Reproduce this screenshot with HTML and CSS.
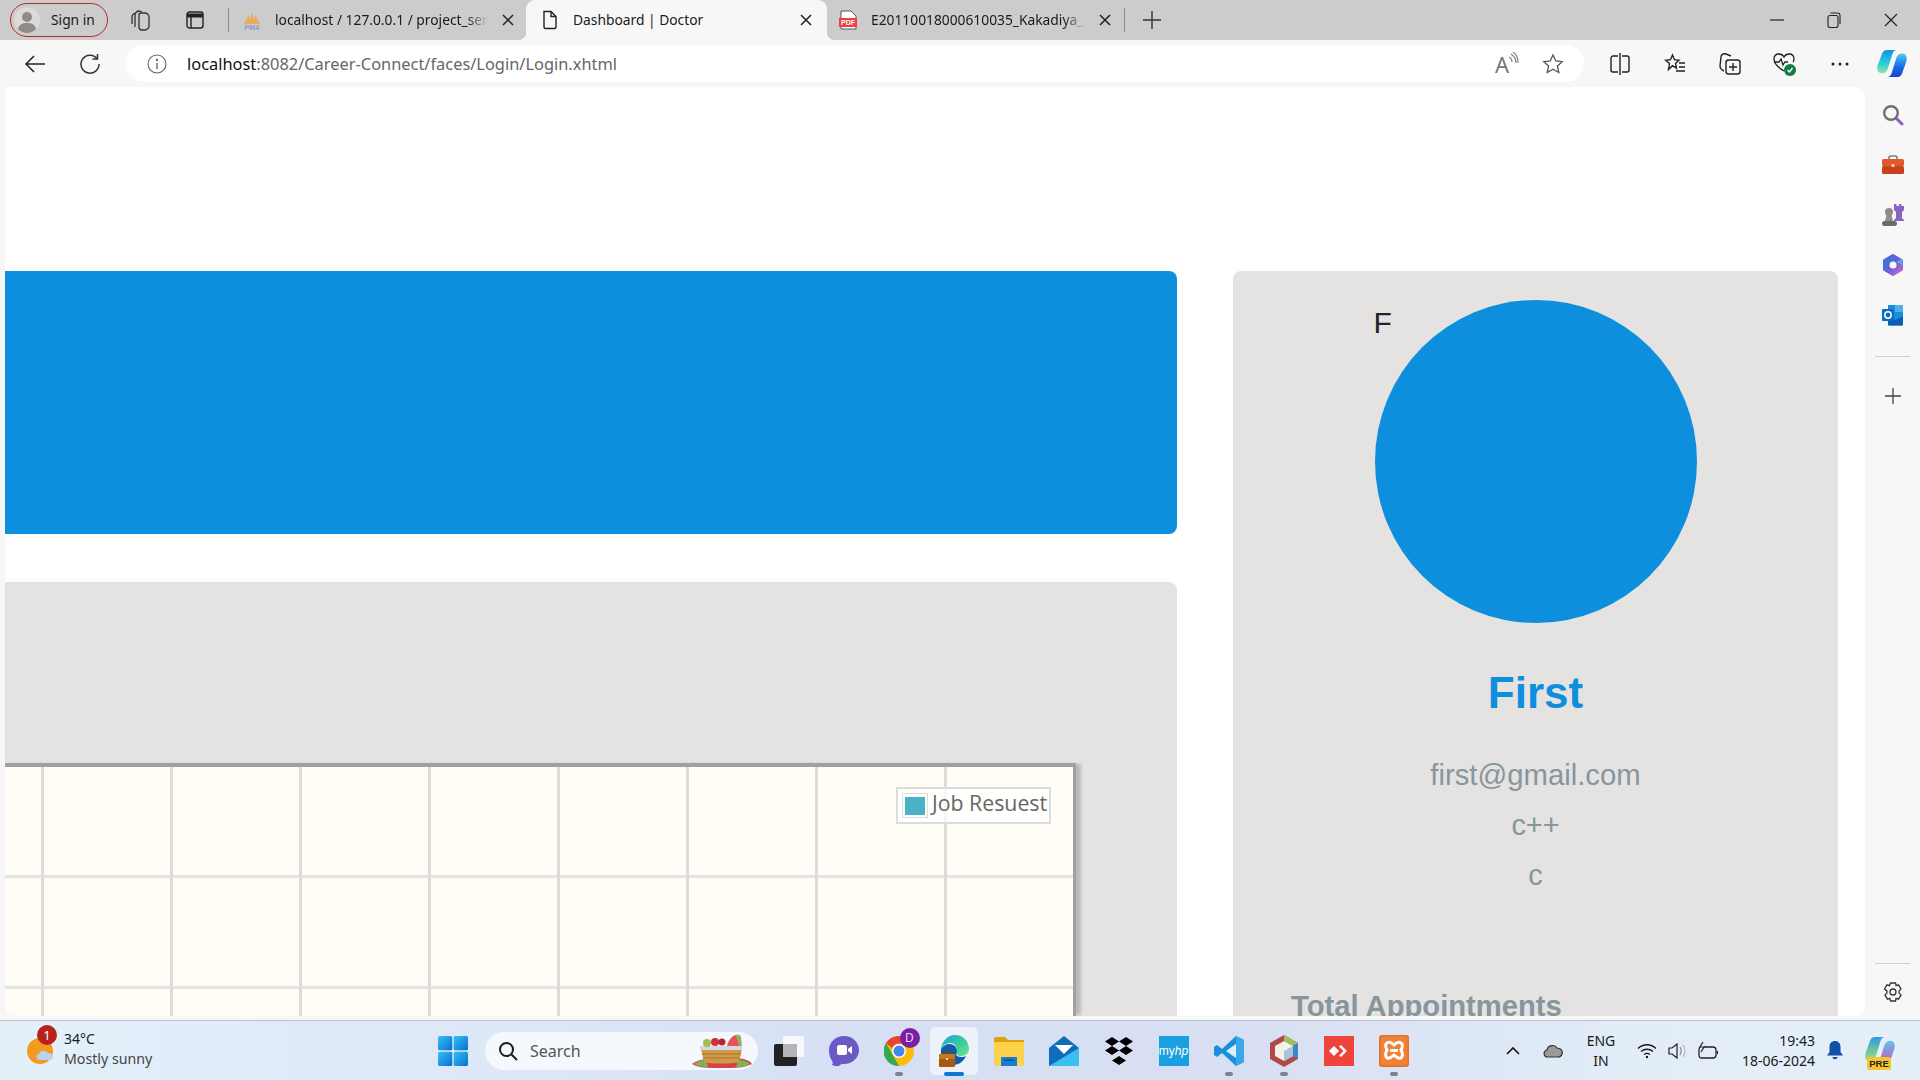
FILE: index.html
```html
<!DOCTYPE html>
<html lang="en">
<head>
    <meta charset="UTF-8">
    <title>Dashboard | Doctor</title>
    <link rel="stylesheet" href="styles.css">
</head>
<body>
    <!-- Tab strip -->
    <div class="tabstrip">
        <div class="profile">
            <svg class="avatar-ico" viewBox="0 0 26 26"><circle cx="13" cy="13" r="13" fill="#dcdad6"/><circle cx="13" cy="10" r="5" fill="#8f8b86"/><path d="M4 22c1-5 5-6 9-6s8 1 9 6c-2 2-5 4-9 4s-7-2-9-4z" fill="#8f8b86"/></svg>
            <span>Sign in</span>
        </div>
        <div class="strip-btn first-btn">
            <svg width="22" height="22" viewBox="0 0 22 22" fill="none" stroke="#333" stroke-width="1.3"><path d="M2 15V8c0-2 1-3 3-4"/><path d="M5 18V6c0-2 2-4 4-4l3 1"/><path d="M9 6c0-1 1-2 2-2h4c2 0 4 2 4 4v9c0 2-2 4-4 4h-3c-2 0-3-1-3-3z"/></svg>
        </div>
        <div class="strip-btn">
            <svg width="18" height="18" viewBox="0 0 18 18" fill="none" stroke="#222" stroke-width="1.4"><rect x="1" y="1" width="16" height="16" rx="2.5"/><path d="M1 4.5h16" stroke-width="4"/><path d="M5 5v12"/></svg>
        </div>
        <div class="strip-sep"></div>
        <div class="tab tab-one">
            <svg class="tab-icon" viewBox="0 0 20 20"><path d="M2 14 7 5l2 9zM7 14l3-12 3 12zM11 14l2-9 5 9z" fill="#eda95c"/><text x="10" y="19.5" text-anchor="middle" class="pma-text">PMA</text></svg>
            <span class="tab-title fade">localhost / 127.0.0.1 / project_ser</span>
            <svg class="tab-close" viewBox="0 0 14 14"><path d="M2 2l10 10M12 2 2 12" stroke="#222" stroke-width="1.5"/></svg>
        </div>
        <div class="tab tab-active">
            <svg class="tab-icon" viewBox="0 0 20 20" fill="none" stroke="#222" stroke-width="1.4"><path d="M4 1.5h7l5 5V17c0 1-.7 1.5-1.5 1.5h-9C4.700 18.5 4 18 4 17z"/><path d="M11 1.5V6.5h5"/></svg>
            <span class="tab-title">Dashboard | Doctor</span>
            <svg class="tab-close" viewBox="0 0 14 14"><path d="M2 2l10 10M12 2 2 12" stroke="#222" stroke-width="1.5"/></svg>
        </div>
        <div class="tab tab-three">
            <svg class="tab-icon" viewBox="0 0 20 20"><path d="M3 1h10l5 5v13H3z" fill="#fff" stroke="#555"/><rect x="1" y="8" width="18" height="9" fill="#ee3f3f"/><text x="10" y="15" text-anchor="middle" class="pdf-text">PDF</text></svg>
            <span class="tab-title fade">E20110018000610035_Kakadiya_</span>
            <svg class="tab-close" viewBox="0 0 14 14"><path d="M2 2l10 10M12 2 2 12" stroke="#222" stroke-width="1.5"/></svg>
        </div>
        <div class="strip-sep no-gap"></div>
        <div class="new-tab">
            <svg width="18" height="18" viewBox="0 0 18 18"><path d="M9 0v18M0 9h18" stroke="#333" stroke-width="1.4"/></svg>
        </div>
        <div class="win-controls">
            <svg width="14" height="14" viewBox="0 0 14 14"><path d="M0 7h14" stroke="#222" stroke-width="1.2"/></svg>
            <svg width="14" height="16" viewBox="0 0 14 16" fill="none" stroke="#222" stroke-width="1.1"><rect x="1" y="3.5" width="10" height="12" rx="2"/><path d="M3.5 1h7c1.5 0 2.5 1 2.5 2.5V12"/></svg>
            <svg width="14" height="14" viewBox="0 0 14 14"><path d="M1 1l12 12M13 1 1 13" stroke="#222" stroke-width="1.2"/></svg>
        </div>
    </div>

    <!-- Address bar row -->
    <div class="toolbar">
        <div class="nav-btn">
            <svg width="22" height="20" viewBox="0 0 22 20" fill="none" stroke="#222" stroke-width="1.5"><path d="M21 10H2M10 2l-8 8 8 8"/></svg>
        </div>
        <div class="nav-btn">
            <svg width="22" height="22" viewBox="0 0 22 22" fill="none" stroke="#333" stroke-width="1.5"><path d="M18 5.5A9 9 0 1 0 20 11"/><path d="M18.5 1v5h-5"/></svg>
        </div>
        <div class="address">
            <svg class="info-ico" width="20" height="20" viewBox="0 0 20 20" fill="none" stroke="#666" stroke-width="1.1"><circle cx="10" cy="10" r="9"/><path d="M10 9v6" stroke-width="1.4"/><circle cx="10" cy="6" r=".6" fill="#666"/></svg>
            <div class="url"><span class="host">localhost</span>:8082/Career-Connect/faces/Login/Login.xhtml</div>
            <div class="read-aloud">
                <span class="read-a">A</span>
                <svg width="10" height="15" viewBox="0 0 10 15" fill="none" stroke="#777" stroke-width="1.1"><path d="M0 5c2 1 3 3 3 5M2 2c3 2 5 5 5 9M4 0c3 2 5 6 5 11"/></svg>
            </div>
            <svg class="star-ico" width="22" height="22" viewBox="0 0 22 22" fill="none" stroke="#555" stroke-width="1.3"><path d="M11 2l2.800 6 6.400.7-4.800 4.300 1.400 6.500L11 16.200 5.200 19.500 6.600 13 1.800 8.700 8.200 8z"/></svg>
        </div>
        <div class="tools">
            <div class="tool"><svg width="20" height="24" viewBox="0 0 20 24" fill="none" stroke="#222" stroke-width="1.4"><path d="M8 4H3C2 4 1 5 1 6v12c0 1 1 2 2 2h5M12 4h5c1 0 2 1 2 2v12c0 1-1 2-2 2h-5M10 1v22"/></svg></div>
            <div class="tool"><svg width="22" height="22" viewBox="0 0 22 22" fill="none" stroke="#222" stroke-width="1.4"><path d="M8.500 2l2 4.700 4.500.5-3.500 3.200 1 4.800-4-2.500-4 3.800 1-6L1.500 7.200 6.500 6.700z"/><path d="M15 10h6M15 14h6M12 18h9"/></svg></div>
            <div class="tool"><svg width="22" height="24" viewBox="0 0 22 24" fill="none" stroke="#222" stroke-width="1.4"><path d="M5 19C3 18 1 16 1 14l1-9c0-2 2-4 5-3l5 2"/><rect x="7" y="8" width="14" height="14" rx="2.5"/><path d="M14 11v8M10 15h8"/></svg></div>
            <div class="tool">
                <svg width="26" height="26" viewBox="0 0 26 26" fill="none" stroke="#222" stroke-width="1.3"><path d="M12 20C7 17 2 13 2 8c0-3 2-5 5-5 2 0 4 1 5 3 1-2 3-3 5-3 3 0 5 2 5 5 0 1 0 2-1 3"/><path d="M3 11h4l2-3 2 6 2-3h3"/><circle cx="18" cy="19" r="6" fill="#107c41" stroke="none"/><path d="M15.500 19l2 2 3-4" stroke="#fff" stroke-width="1.4"/></svg>
            </div>
            <div class="tool"><svg width="18" height="4" viewBox="0 0 18 4" fill="#222"><circle cx="2" cy="2" r="1.5"/><circle cx="9" cy="2" r="1.5"/><circle cx="16" cy="2" r="1.5"/></svg></div>
            <div class="tool tool-copilot">
                <svg width="30" height="29" viewBox="0 0 30 32" preserveAspectRatio="none">
                    <defs>
                        <linearGradient id="cpA" x1="0" y1="0" x2="0" y2="1"><stop offset="0" stop-color="#1090e8"/><stop offset=".6" stop-color="#2fd0d8"/><stop offset="1" stop-color="#8fe8a8"/></linearGradient>
                        <linearGradient id="cpB" x1="0" y1="0" x2="0" y2="1"><stop offset="0" stop-color="#4fc8f4"/><stop offset=".55" stop-color="#1a6fe8"/><stop offset="1" stop-color="#1b3fc8"/></linearGradient>
                    </defs>
                    <path d="M10 1h10c-3 0-4 2-5 6l-4 14c-1 4-3 6-6 6C1 27-1 23 1 17L5 5c1-3 3-4 5-4z" fill="url(#cpA)"/>
                    <path d="M20 31H10c3 0 4-2 5-6l4-14c1-4 3-6 6-6 4 0 6 4 4 10l-4 12c-1 3-3 4-5 4z" fill="url(#cpB)"/>
                </svg>
            </div>
        </div>
    </div>

    <div class="stage">
        <div class="page">
            <div class="left-col">
                <div class="banner"></div>
                <div class="chart-card">
                    <div class="chart">
                        <div class="legend">
                            <div class="swatch"><div class="swatch-fill"></div></div>
                            <span class="legend-label">Job Resuest</span>
                        </div>
                    </div>
                </div>
            </div>
            <div class="profile-card">
                <div class="avatar">
                    <span class="avatar-alt">F</span>
                    <div class="avatar-circle"></div>
                </div>
                <h2 class="doc-name">First</h2>
                <div class="doc-email">first@gmail.com</div>
                <div class="doc-line">c++</div>
                <div class="doc-line">c</div>
                <h3 class="doc-total">Total Appointments</h3>
            </div>
        </div>

        <!-- Edge sidebar -->
        <div class="sidebar">
            <div class="side-item">
                <svg width="22" height="22" viewBox="0 0 22 22" fill="none"><circle cx="9" cy="9" r="6.800" stroke="#6f6f6f" stroke-width="2.4"/><path d="M14 14l6 6" stroke="#8a5cc0" stroke-width="3" stroke-linecap="round"/></svg>
            </div>
            <div class="side-item">
                <svg width="24" height="20" viewBox="0 0 24 20"><path d="M8 5V2.500C8 1.500 9 1 10 1h4c1 0 2 .5 2 1.500V5" fill="none" stroke="#7d7d7d" stroke-width="1.6"/><rect x="1" y="4" width="22" height="7" rx="1.5" fill="#e0592a"/><rect x="1" y="11" width="22" height="8" rx="1.5" fill="#c9401c"/><rect x="10.500" y="9" width="3" height="3" rx=".5" fill="#f4c9b5"/></svg>
            </div>
            <div class="side-item">
                <svg width="24" height="24" viewBox="0 0 24 24"><circle cx="8" cy="9" r="4" fill="#8d8d8d"/><path d="M5.500 12h5l1.500 6H4z" fill="#8d8d8d"/><rect x="1" y="18" width="15" height="5" rx="2.5" fill="#6a6a6a"/><path d="M13 1h2.500v2H18V1h2.500v2H23V1v6l-2 2v6l2 2v1H13v-1l2-2V9l-2-2z" fill="#8a62bf"/></svg>
            </div>
            <div class="side-item">
                <svg width="22" height="24" viewBox="0 0 22 24">
                    <defs><linearGradient id="m3" x1="0" y1="0" x2="1" y2="1"><stop offset="0" stop-color="#2f78e0"/><stop offset=".5" stop-color="#6a5fd8"/><stop offset="1" stop-color="#c76ad0"/></linearGradient></defs>
                    <path d="M11 2.500l8.500 5v9l-8.500 5-8.500-5v-9z" fill="url(#m3)" stroke="url(#m3)" stroke-width="3" stroke-linejoin="round"/><circle cx="11" cy="12" r="3.500" fill="#f7f7f7"/><path d="M14 9l6-3v6z" fill="#4fb0e8"/>
                </svg>
            </div>
            <div class="side-item">
                <svg width="22" height="22" viewBox="0 0 22 22"><path d="M6 1h15v19c0 1-.5 1.500-1.500 1.500H7.500C6.500 21.500 6 21 6 20z" fill="#1490df"/><path d="M6 12l7.500 4L21 12v8c0 1-.5 1.500-1.500 1.500h-12C6.500 21.500 6 21 6 20z" fill="#0a5fb0"/><rect x="13" y="1" width="8" height="7" fill="#50b0ea"/><rect x="0" y="5" width="12" height="12" rx="1" fill="#0f6cbd"/><circle cx="6" cy="11" r="3.200" fill="none" stroke="#fff" stroke-width="1.5"/></svg>
            </div>
            <div class="side-rule"></div>
            <div class="side-plus">
                <svg width="16" height="16" viewBox="0 0 16 16"><path d="M8 0v16M0 8h16" stroke="#444" stroke-width="1.3"/></svg>
            </div>
            <div class="side-bottom">
                <div class="side-rule"></div>
                <svg class="gear" width="20" height="20" viewBox="0 0 20 20" fill="none" stroke="#333" stroke-width="1.3"><path d="M7.500 1h5l.6 2.600 2.400-.8 2.500 4.200-1.900 1.900 0 2.200 1.900 1.900-2.500 4.200-2.400-.8-.6 2.600h-5l-.6-2.600-2.400.8-2.500-4.200 1.900-1.900 0-2.200L1.500 7l2.500-4.200 2.400.8z"/><circle cx="10" cy="10" r="3"/></svg>
            </div>
        </div>
    </div>

    <!-- Windows taskbar -->
    <div class="taskbar">
        <div class="weather">
            <div class="weather-ico">
                <svg width="30" height="34" viewBox="0 0 30 34"><circle cx="14" cy="17" r="13" fill="#f39a1f"/><path d="M14 26c-4 0-5-5-1-6 1-4 7-4 9-1 5-1 7 6 2 7z" fill="#b9d2f2"/></svg>
                <span class="badge">1</span>
            </div>
            <div class="weather-text">
                <div class="temp">34°C</div>
                <div class="sky">Mostly sunny</div>
            </div>
        </div>
        <div class="app">
            <svg width="30" height="30" viewBox="0 0 30 30">
                <defs><linearGradient id="win" x1="0" y1="0" x2="1" y2="1"><stop offset="0" stop-color="#35c1f5"/><stop offset="1" stop-color="#0a6fd0"/></linearGradient></defs>
                <rect x="0" y="0" width="14.300" height="14.300" rx="1.5" fill="url(#win)"/><rect x="15.700" y="0" width="14.300" height="14.300" rx="1.5" fill="url(#win)"/><rect x="0" y="15.700" width="14.300" height="14.300" rx="1.5" fill="url(#win)"/><rect x="15.700" y="15.700" width="14.300" height="14.300" rx="1.5" fill="url(#win)"/>
            </svg>
        </div>
        <div class="search">
            <svg width="20" height="20" viewBox="0 0 20 20" fill="none" stroke="#1a1a1a" stroke-width="2"><circle cx="8.500" cy="8.500" r="6.500"/><path d="M13.500 13.500 19 19"/></svg>
            <span>Search</span>
            <svg class="basket" width="60" height="34" viewBox="0 0 60 34">
                <path d="M0 30c6-5 16-6 24-5h14c8-1 18-1 22 5-8 4-16 4-30 4S6 34 0 30z" fill="#d9414a"/>
                <path d="M2 30c4-3 8-4 12-4l2 7C10 33 5 32 2 30zM46 26c5 0 9 1 12 4-3 2-7 3-14 3z" fill="#7eb356"/>
                <path d="M9 15h41l-3 13c-5 2-30 2-35 0z" fill="#cf9a48"/>
                <path d="M10 20h39M11 24h37" stroke="#a87530" stroke-width="1"/>
                <rect x="8" y="12" width="42" height="4" rx="1" fill="#d8d8e4"/>
                <circle cx="15" cy="9" r="4" fill="#9fc04e"/><circle cx="23" cy="8" r="4" fill="#d4303c"/><circle cx="30" cy="8" r="3.500" fill="#b62833"/>
                <path d="M35 12c1-6 5-10 9-11l4 11z" fill="#e7525a"/><path d="M44 1c2-1 4 0 5 2l1 9h-2z" fill="#86b852"/>
            </svg>
        </div>
        <div class="app">
            <svg width="30" height="30" viewBox="0 0 30 30"><rect x="0" y="8" width="23" height="22" rx="2" fill="#222"/><rect x="9" y="0" width="21" height="21" rx="2" fill="#fff" fill-opacity=".75"/><rect x="9" y="8" width="14" height="13" fill="#b5b5b5"/></svg>
        </div>
        <div class="app">
            <svg width="30" height="30" viewBox="0 0 30 30"><path d="M15 0c8 0 15 6 15 14s-7 14-15 14c-2 0-3 0-5 2-2 0-5 0-7-1 1-1 1-3 0-4-2-3-3-7-3-11C0 6 7 0 15 0z" fill="#6a5bc4"/><rect x="8" y="9" width="10" height="10" rx="2" fill="#fff"/><path d="M19 13l4-3v8l-4-3z" fill="#fff"/></svg>
        </div>
        <div class="app app-run">
            <div class="chrome">
                <svg width="30" height="30" viewBox="0 0 30 30"><circle cx="15" cy="15" r="15" fill="#fbbc05"/><path d="M15 0a15 15 0 0 1 13 7.500H15a7.500 7.500 0 0 0-7 4.500L2 7C5 2.500 10 0 15 0z" fill="#ea4335"/><path d="M2 7l6.500 11.500L15 30A15 15 0 0 1 2 7z" fill="#34a853"/><circle cx="15" cy="15" r="7" fill="#fff"/><circle cx="15" cy="15" r="5.500" fill="#4285f4"/></svg>
                <span class="chrome-badge">D</span>
            </div>
        </div>
        <div class="app app-current">
            <svg width="30" height="32" viewBox="0 0 30 32">
                <defs><linearGradient id="edg" x1="0" y1="0" x2="1" y2="1"><stop offset="0" stop-color="#1fa2d8"/><stop offset=".6" stop-color="#3ecf9a"/><stop offset="1" stop-color="#7be38a"/></linearGradient></defs>
                <path d="M2 14C3 6 9 0 16 0c8 0 14 6 14 14 0 4-3 7-8 7-3 0-5-1-5-3 0-1 1-1 1-3 0-4-3-7-7-7-4 0-7 2-9 6z" fill="url(#edg)"/>
                <path d="M2 14c2-3 5-5 8-5 5 0 8 3 8 7 0 2-1 2-1 3 0 2 2 3 5 3 2 0 3 0 5-1-2 5-7 9-13 9-2 0-4 0-6-1-3-2-5-5-6-9z" fill="#0c5fa8"/>
                <rect x="0" y="19" width="16" height="13" rx="1" fill="#a85a12"/><rect x="0" y="19" width="16" height="5" fill="#c8761f"/><path d="M5 19v-2h6v2" fill="none" stroke="#7a4210" stroke-width="1.4"/><rect x="7" y="23" width="2" height="2" fill="#f6d9a8"/>
            </svg>
        </div>
        <div class="app">
            <svg width="30" height="30" viewBox="0 0 30 30"><path d="M0 3c0-1 1-2 2-2h9l3 3h16v4H0z" fill="#e0a110"/><path d="M0 6h30v22c0 1-1 2-2 2H2c-1 0-2-1-2-2z" fill="#fcd24a"/><rect x="7" y="21" width="16" height="9" fill="#1580cf"/><rect x="10" y="23.500" width="10" height="1.5" fill="#0b4f86"/></svg>
        </div>
        <div class="app">
            <svg width="30" height="30" viewBox="0 0 30 30"><path d="M0 12 15 0l15 12v18H0z" fill="#0f6cbd"/><path d="M30 12v18H0z" fill="#39c0ee"/><path d="M6 9h18l-9 9z" fill="#fff"/></svg>
        </div>
        <div class="app">
            <svg width="30" height="28" viewBox="0 0 30 28" fill="#000"><path d="M8 0l7 4.500L8 9 1 4.500zM22 0l7 4.500L22 9l-7-4.500zM8 9l7 4.500L8 18l-7-4.500zM22 9l7 4.500L22 18l-7-4.500zM15 19l7 4.500L15 28l-7-4.500z"/></svg>
        </div>
        <div class="app">
            <div class="myhp">my<i>hp</i></div>
        </div>
        <div class="app app-run">
            <svg width="30" height="30" viewBox="0 0 30 30"><path d="M22 0l8 4v22l-8 4L8 17l-5 4-3-2v-8l3-2 5 4z" fill="#1a8fdc"/><path d="M22 0v30l8-4V4z" fill="#3ba7e8"/><path d="M22 8 12 15l10 7z" fill="#f4f8fc" fill-opacity=".9"/></svg>
        </div>
        <div class="app app-run">
            <svg width="30" height="32" viewBox="0 0 30 32"><path d="M15 0l14 8v16l-14 8L1 24V8z" fill="#b04a4a"/><path d="M15 0l14 8-5 3-9-5z" fill="#9ec05a"/><path d="M29 8v16l-5-3V11z" fill="#3f86c8"/><path d="M15 6l9 5v10l-9 5-9-5V11z" fill="#f3f1e8"/><path d="M15 16l9-5v10l-9 5z" fill="#a6c4de"/></svg>
        </div>
        <div class="app">
            <svg width="30" height="30" viewBox="0 0 30 30"><rect width="30" height="30" fill="#ef443b"/><path d="M10 10l5 5-5 5-5-5z" fill="#fff"/><path d="M17 9l6 6-6 6-2-1.500 4.500-4.500L15 10.500z" fill="#fff"/></svg>
        </div>
        <div class="app app-run">
            <svg width="30" height="32" viewBox="0 0 30 32"><rect width="30" height="32" rx="3" fill="#e0702a"/><rect x="1.5" y="1.5" width="27" height="29" rx="2" fill="#f08234"/><path d="M8 8c3-2 5 0 7 2 2-2 4-4 7-2 3 2 1 5 0 7 1 2 3 5 0 8-3 1-5-1-7-3-2 2-4 4-7 3-3-3-1-6 0-8-1-2-3-5 0-7z" fill="none" stroke="#fff" stroke-width="3"/><path d="M11 15.500h8" stroke="#fff" stroke-width="3"/></svg>
        </div>

        <div class="tray">
            <div class="tray-item chevron"><svg width="14" height="9" viewBox="0 0 14 9" fill="none" stroke="#1a1a1a" stroke-width="1.7"><path d="M1 8l6-6 6 6"/></svg></div>
            <div class="tray-item cloud"><svg width="20" height="15" viewBox="0 0 20 15"><path d="M5 14c-5 0-5-6-1-7 1-5 8-6 10-2 4 0 6 3 5 6-.5 2-2 3-4 3z" fill="#9a9a9a" stroke="#333" stroke-width="1.2"/></svg></div>
            <div class="tray-item lang"><div>ENG</div><div>IN</div></div>
            <div class="tray-item wifi"><svg width="20" height="16" viewBox="0 0 20 16" fill="none" stroke="#1a1a1a" stroke-width="1.3"><path d="M1 5.500c5-5 13-5 18 0M4 8.500c3.500-3 8.500-3 12 0M7 11.500c2-1.500 4-1.500 6 0"/><circle cx="10" cy="14" r="1.2" fill="#1a1a1a" stroke="none"/></svg></div>
            <div class="tray-item speaker"><svg width="20" height="18" viewBox="0 0 20 18" fill="none" stroke="#222" stroke-width="1.2"><path d="M1 6h3l5-4v14l-5-4H1z"/><path d="M12 5c1.500 2 1.500 6 0 8" stroke="#888"/><path d="M15 3c2.500 3 2.500 9 0 12" stroke="#bbb"/></svg></div>
            <div class="tray-item battery"><svg width="21" height="18" viewBox="0 0 21 18" fill="none" stroke="#222" stroke-width="1.3"><path d="M7 5h9c2 0 3 1 3 3v5c0 2-1 3-3 3H5c-2 0-3-1-3-3V8c0-1 0-2 1-3"/><path d="M6 0 3 5h4l-3 5" stroke-width="1.2"/><path d="M20.500 9v3"/></svg></div>
            <div class="clock"><div>19:43</div><div>18-06-2024</div></div>
            <div class="tray-item bell"><svg width="16" height="19" viewBox="0 0 16 19" fill="#0f4fa8"><path d="M8 0c3.500 0 5.500 2.500 5.500 6v5l2.500 3.500H0L2.500 11V6C2.500 2.500 4.500 0 8 0z"/><path d="M5.500 16h5c0 3-5 3-5 0z"/></svg></div>
            <div class="tray-item pre">
                <svg width="30" height="30" viewBox="0 0 30 32" preserveAspectRatio="none">
                    <defs>
                        <linearGradient id="preA" x1="0" y1="0" x2="0" y2="1"><stop offset="0" stop-color="#2a9ae8"/><stop offset="1" stop-color="#a6e36e"/></linearGradient>
                        <linearGradient id="preB" x1="0" y1="0" x2="0" y2="1"><stop offset="0" stop-color="#5fc4f0"/><stop offset="1" stop-color="#d04bb0"/></linearGradient>
                    </defs>
                    <path d="M10 1h10c-3 0-4 2-5 6l-4 14c-1 4-3 6-6 6C1 27-1 23 1 17L5 5c1-3 3-4 5-4z" fill="url(#preA)"/>
                    <path d="M20 31H10c3 0 4-2 5-6l4-14c1-4 3-6 6-6 4 0 6 4 4 10l-4 12c-1 3-3 4-5 4z" fill="url(#preB)"/>
                </svg>
                <span class="pre-tag">PRE</span>
            </div>
        </div>
    </div>
</body>
</html>
```

FILE: styles.css
```css
* {
    box-sizing: border-box;
}
body {
    margin: 0;
    width: 1920px;
    height: 1080px;
    overflow: hidden;
    display: flex;
    flex-direction: column;
    font-family: "Noto Sans", "Open Sans", sans-serif;
    background-color: #f7f7f7;
    color: #1a1a1a;
}
svg {
    display: block;
    flex: none;
}

/* tab strip */
.tabstrip {
    display: flex;
    align-items: stretch;
    height: 40px;
    flex: none;
    padding-left: 10px;
    background-color: #cccccc;
    font-size: 13.8px;
    line-height: 18px;
}
.profile {
    display: flex;
    align-items: center;
    gap: 11px;
    width: 98px;
    height: 34px;
    margin-top: 3px;
    padding-left: 3px;
    border: 1.5px solid #b5282e;
    border-radius: 17px;
}
.avatar-ico {
    width: 26px;
    height: 26px;
}
.strip-btn {
    display: flex;
    align-items: center;
    justify-content: center;
    width: 53px;
}
.first-btn {
    margin-left: 6px;
    margin-right: 1px;
}
.strip-sep {
    width: 1px;
    height: 24px;
    margin: 8px 0 0 7px;
    background-color: #8c8c8c;
}
.strip-sep.no-gap {
    margin-left: 0;
}
.tab {
    position: relative;
    display: flex;
    align-items: center;
    gap: 13px;
    width: 297px;
    padding: 0 11px 1px 13px;
}
.tab-active {
    width: 301px;
    padding: 0 14px 1px;
    background-color: #f7f7f7;
    border-radius: 9px 9px 0 0;
}
.tab-active::before,
.tab-active::after {
    content: "";
    position: absolute;
    bottom: 0;
    width: 8px;
    height: 8px;
}
.tab-active::before {
    left: -8px;
    background: radial-gradient(circle at 0 0, transparent 8px, #f7f7f7 8.5px);
}
.tab-active::after {
    right: -8px;
    background: radial-gradient(circle at 100% 0, transparent 8px, #f7f7f7 8.5px);
}
.tab-three {
    width: 297px;
    padding: 0 12px 1px 11px;
}
.tab-icon {
    width: 20px;
    height: 20px;
}
.tab-title {
    flex: 1;
    overflow: hidden;
    white-space: nowrap;
}
.tab-title.fade {
    -webkit-mask-image: linear-gradient(90deg, #000 90%, transparent);
    mask-image: linear-gradient(90deg, #000 90%, transparent);
}
.tab-close {
    width: 14px;
    height: 14px;
}
.pma-text {
    font-family: "Liberation Sans", sans-serif;
    font-size: 7px;
    font-style: italic;
    font-weight: bold;
    fill: #8b9bc4;
}
.pdf-text {
    font-family: "Liberation Sans", sans-serif;
    font-size: 7px;
    font-weight: bold;
    fill: #ffffff;
}
.new-tab {
    display: flex;
    align-items: center;
    margin-left: 18px;
}
.win-controls {
    display: flex;
    align-items: center;
    gap: 43px;
    margin-left: auto;
    padding-right: 22px;
}

/* address row */
.toolbar {
    display: flex;
    align-items: center;
    height: 47px;
    flex: none;
    padding-left: 13px;
    background-color: #f7f7f7;
}
.nav-btn {
    display: flex;
    align-items: center;
    justify-content: center;
    width: 44px;
    margin-right: 11px;
}
.address {
    display: flex;
    align-items: center;
    flex: none;
    width: 1458px;
    height: 37px;
    margin-left: 3px;
    padding: 0 20px 0 21px;
    background-color: #ffffff;
    border-radius: 18px;
}
.url {
    flex: 1;
    margin-left: 20px;
    font-size: 16.4px;
    color: #666666;
    white-space: nowrap;
}
.host {
    color: #111111;
}
.read-aloud {
    display: flex;
    align-items: flex-start;
    width: 28px;
}
.read-a {
    font-size: 22px;
    line-height: 24px;
    color: #777777;
}
.star-ico {
    margin-left: 19px;
}
.tools {
    display: flex;
    align-items: center;
    flex: none;
    margin-left: 8px;
}
.tool {
    display: flex;
    align-items: center;
    justify-content: center;
    width: 55px;
}
.tool-copilot {
    width: 50px;
}

/* page */
.stage {
    display: flex;
    flex: 1;
    min-height: 0;
    padding-left: 5px;
}
.page {
    display: flex;
    gap: 56px;
    width: 1860px;
    margin-bottom: 4px;
    padding-top: 184px;
    overflow: hidden;
    background-color: #ffffff;
    border-radius: 0 9px 9px 9px;
}
.left-col {
    display: flex;
    flex-direction: column;
    gap: 48px;
    width: 1172px;
}
.banner {
    height: 263px;
    flex: none;
    background-color: #0d8fdd;
    border-radius: 0 8px 8px 0;
}
.chart-card {
    flex: 1;
    padding-top: 181px;
    background-color: #e4e3e2;
    border-radius: 0 8px 0 0;
}
.chart {
    position: relative;
    width: 1071px;
    height: 100%;
    border-top: 4px solid #a0a0a0;
    border-right: 3px solid #a0a0a0;
    box-shadow: 6px 0 3px -1px rgba(0, 0, 0, 0.18);
    background-color: #fffdf6;
    background-image:
        linear-gradient(90deg, #dcdcdb 3px, transparent 3px),
        linear-gradient(180deg, #e4e4e2 3px, transparent 3px);
    background-size: 129px 100%, 100% 111px;
    background-position: 36px 0, 0 108px;
}
.legend {
    position: absolute;
    left: 891px;
    top: 20px;
    display: flex;
    align-items: center;
    gap: 4px;
    width: 155px;
    height: 37px;
    padding-left: 4px;
    background-color: rgba(255, 255, 255, 0.75);
    border: 2px solid #dcdcdc;
    font-family: "Open Sans", sans-serif;
    font-size: 21.3px;
    color: #666666;
    white-space: nowrap;
}
.legend-label {
    line-height: 26px;
    margin-bottom: 5px;
}
.swatch {
    width: 26px;
    height: 25px;
    padding: 3px 2px 2px;
    border: 1px solid #dcdcdc;
    flex: none;
}
.swatch-fill {
    height: 100%;
    background-color: #4bb2c5;
}

/* profile card */
.profile-card {
    width: 605px;
    padding-top: 29px;
    background-color: #e4e3e2;
    border-radius: 8px 8px 0 0;
    font-family: "Liberation Sans", Arial, sans-serif;
    color: #88959c;
    text-align: center;
}
.avatar {
    position: relative;
    width: 322px;
    margin: 0 auto;
}
.avatar-circle {
    width: 322px;
    height: 323px;
    background-color: #0d8fdd;
    border-radius: 50%;
}
.avatar-alt {
    position: absolute;
    left: -1px;
    top: 6px;
    font-size: 30px;
    line-height: 34px;
    color: #212529;
}
.doc-name {
    margin: 42px 0 0;
    font-size: 44px;
    line-height: 56px;
    color: #0d8fdd;
}
.doc-email {
    margin-top: 29px;
    font-size: 29.3px;
    line-height: 50px;
}
.doc-line {
    font-size: 28.8px;
    line-height: 50px;
}
.doc-total {
    margin: 86px 0 0;
    padding-left: 58px;
    font-size: 29.2px;
    line-height: 40px;
    text-align: left;
}

/* edge sidebar */
.sidebar {
    display: flex;
    flex-direction: column;
    align-items: center;
    width: 55px;
    padding-top: 3px;
}
.side-item {
    display: flex;
    align-items: center;
    justify-content: center;
    height: 50px;
}
.side-rule {
    width: 35px;
    height: 1px;
    background-color: #cfcfcf;
}
.sidebar > .side-rule {
    margin-top: 16px;
}
.side-plus {
    margin-top: 31px;
}
.side-bottom {
    display: flex;
    flex-direction: column;
    align-items: center;
    margin-top: auto;
    padding-bottom: 18px;
}
.gear {
    margin-top: 18px;
}

/* taskbar */
.taskbar {
    display: flex;
    align-items: center;
    height: 60px;
    flex: none;
    border-top: 1px solid #bcc2cd;
    background: linear-gradient(90deg, #e4f0f9 0%, #dde8f8 25%, #d6dff4 45%, #d8dff2 65%, #e2edf8 85%, #e4eff8 100%);
    font-size: 14px;
}
.weather {
    display: flex;
    align-items: center;
    gap: 8px;
    width: 425px;
    padding-left: 26px;
}
.weather-ico {
    position: relative;
    width: 30px;
    height: 34px;
}
.weather-text {
    padding-bottom: 3px;
}
.badge {
    position: absolute;
    left: 11px;
    top: -9px;
    width: 20px;
    height: 20px;
    background-color: #b8221c;
    border-radius: 50%;
    color: #ffffff;
    font-size: 13px;
    line-height: 20px;
    text-align: center;
}
.temp {
    line-height: 19px;
    font-size: 14px;
}
.sky {
    line-height: 21px;
    color: #444444;
    font-size: 14.2px;
}
.app {
    position: relative;
    display: flex;
    align-items: center;
    justify-content: center;
    width: 55px;
    height: 48px;
    flex: none;
}
.app-run::after,
.app-current::after {
    content: "";
    position: absolute;
    left: 50%;
    bottom: -1px;
    width: 8px;
    height: 4px;
    margin-left: -4px;
    background-color: #7d8289;
    border-radius: 2px;
}
.app-current::before {
    content: "";
    position: absolute;
    left: 4px;
    right: 3px;
    top: 0;
    bottom: 0;
    background-color: rgba(255, 255, 255, 0.55);
    border-radius: 5px;
}
.app-current svg {
    position: relative;
}
.app-current::after {
    width: 20px;
    margin-left: -10px;
    background-color: #0a78d4;
}
.search {
    display: flex;
    align-items: center;
    width: 273px;
    height: 38px;
    margin: 0 3px 0 5px;
    padding: 0 6px 0 13px;
    background-color: #f5f8fd;
    border-radius: 19px;
    font-size: 16px;
    color: #555555;
}
.search span {
    margin-left: 12px;
}
.basket {
    margin-left: auto;
}
.chrome {
    position: relative;
}
.chrome-badge {
    position: absolute;
    left: 16px;
    top: -8px;
    width: 20px;
    height: 20px;
    background-color: #7b1fa2;
    border-radius: 50%;
    color: #e8d6f2;
    font-size: 12px;
    line-height: 20px;
    text-align: center;
}
.myhp {
    width: 30px;
    height: 30px;
    background-color: #1aa0e0;
    color: #ffffff;
    font-family: "Liberation Sans", sans-serif;
    font-size: 12px;
    line-height: 30px;
    text-align: center;
}
.tray {
    display: flex;
    align-items: center;
    margin-left: 72px;
}
.tray-item {
    display: flex;
    align-items: center;
    justify-content: center;
}
.chevron,
.cloud,
.bell {
    width: 40px;
}
.lang {
    flex-direction: column;
    width: 56px;
    font-size: 14px;
    line-height: 20px;
}
.wifi {
    width: 36px;
}
.speaker {
    width: 26px;
}
.battery {
    width: 33px;
}
.clock {
    width: 91px;
    font-size: 14px;
    line-height: 20px;
    text-align: right;
    white-space: nowrap;
}
.pre {
    position: relative;
    width: 50px;
    height: 34px;
}
.pre-tag {
    position: absolute;
    left: 12px;
    bottom: -2px;
    width: 24px;
    height: 13px;
    background-color: #f7c52e;
    border-radius: 2px;
    font-family: "Liberation Sans", sans-serif;
    font-size: 9.5px;
    font-weight: bold;
    line-height: 13px;
    text-align: center;
    color: #222222;
}
```
